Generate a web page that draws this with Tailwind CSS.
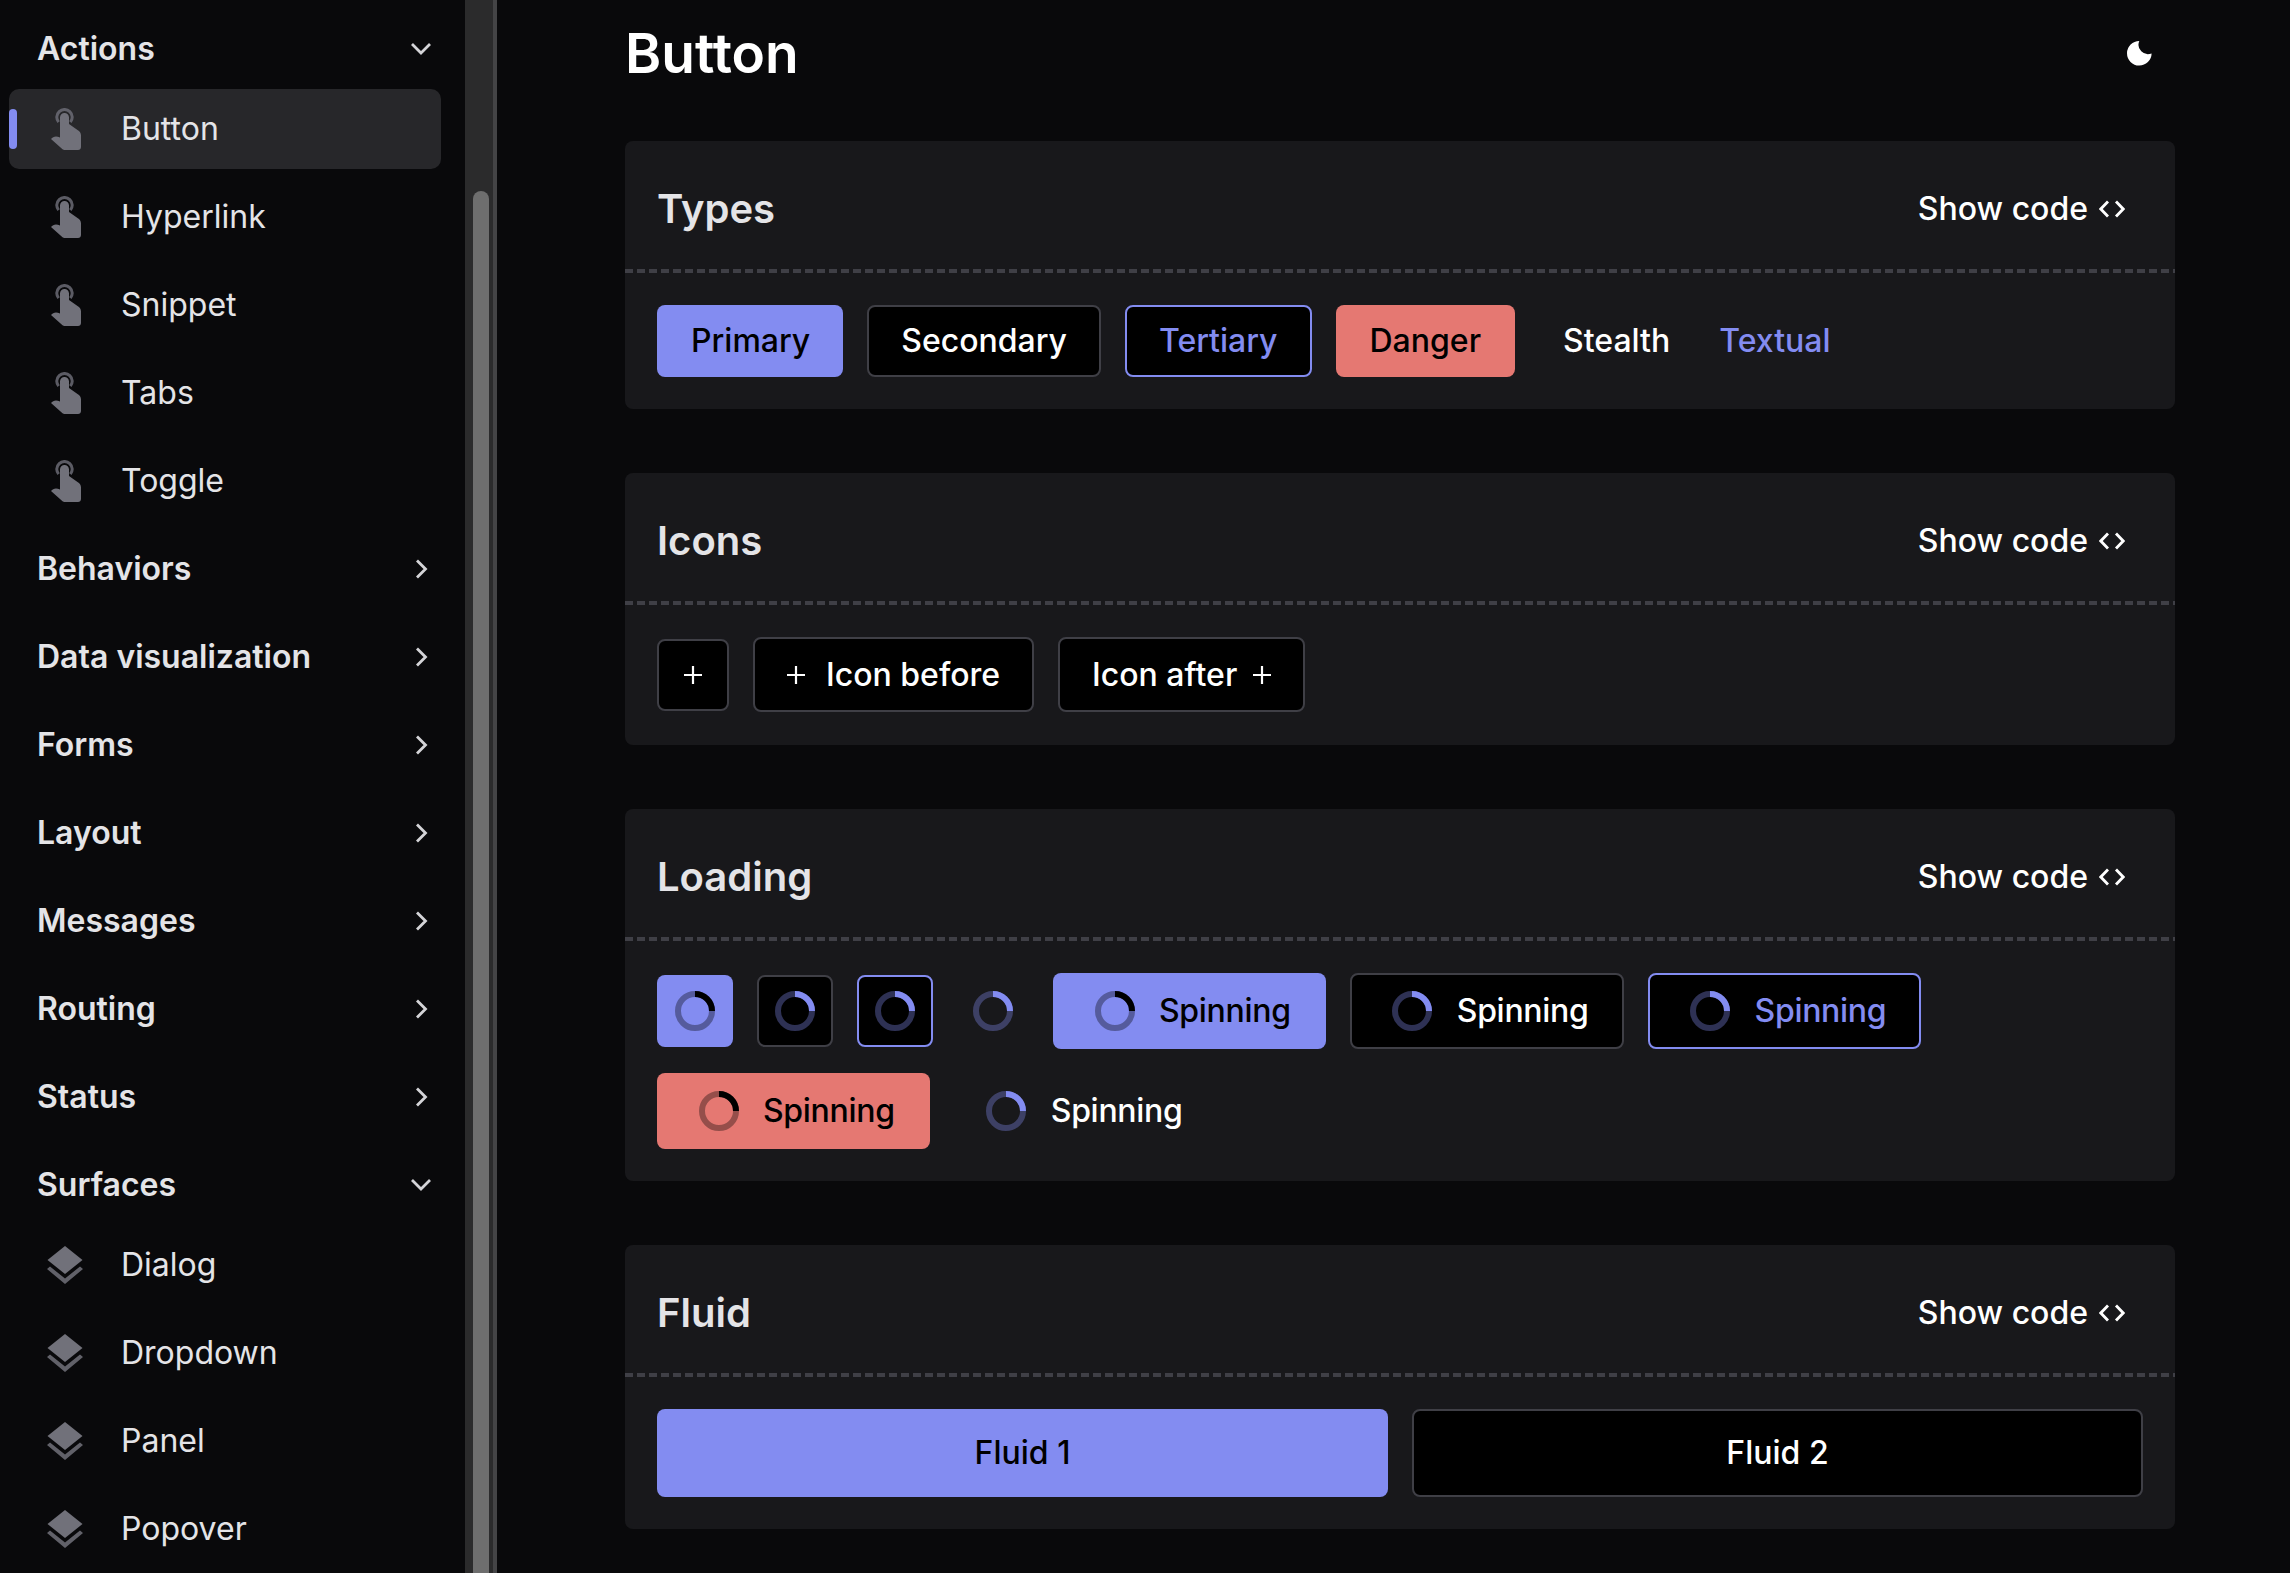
<!DOCTYPE html>
<html lang="en">

<head>
    <meta charset="UTF-8">
    <title>Button</title>
    <script src="https://cdn.jsdelivr.net/npm/@tailwindcss/browser@4"></script>
</head>

<body class="bg-[#09090b] h-screen overflow-hidden flex font-['Inter',sans-serif] text-[32px] leading-[48px]">
    <svg width="0" height="0" class="absolute">
        <defs>
            <symbol id="hand" viewBox="0 0 30 42">
                <path d="M6.450 15.100A9.200 9.200 0 1 1 20.550 15.100L18.250 13.200A6.200 6.200 0 1 0 8.750 13.200z" opacity="0.8" />
                <path d="M9 9.500a4.500 4.500 0 0 1 9 0V16L26.500 22c2.200 1.400 3.500 3 3.500 5.500V39c0 1.800-1.300 3-3 3H13.500c-.7 0-1.400-.3-2-.8L0 31c2.200-2.600 5-3.400 9-1.500z" />
            </symbol>
            <symbol id="layers" viewBox="0 0 36 38">
                <path d="M18 0l17.500 14L18 28 .5 14z" />
                <path d="M3 20.500L18 32.500l15-12 3 2.500L18 38 0 23z" opacity="0.85" />
            </symbol>
            <symbol id="right" viewBox="0 0 20 20">
                <path d="M6 1.500l8.500 8.500-8.500 8.500" fill="none" stroke="currentColor" stroke-width="2.800" />
            </symbol>
            <symbol id="down" viewBox="0 0 20 20">
                <path d="M1 5l9 9 9-9" fill="none" stroke="currentColor" stroke-width="2.800" />
            </symbol>
            <symbol id="plus" viewBox="0 0 20 20">
                <path d="M10 1v18M1 10h18" fill="none" stroke="currentColor" stroke-width="2.200" />
            </symbol>
            <symbol id="code" viewBox="0 0 26 18">
                <path d="M9 1.500L1.800 9 9 16.500M17 1.500L24.200 9 17 16.500" fill="none" stroke="currentColor" stroke-width="2.800" />
            </symbol>
            <symbol id="spin" viewBox="0 0 40 40">
                <circle cx="20" cy="20" r="17" fill="none" stroke="currentColor" stroke-width="6" opacity="0.35" />
                <path d="M20 3A17 17 0 0 1 37 20" fill="none" stroke="currentColor" stroke-width="6" />
            </symbol>
        </defs>
    </svg>

    <!-- Sidebar -->
    <aside class="w-[497px] shrink-0 flex border-r-4 border-[#444446] h-full">
        <nav class="w-[465px] shrink-0 flex flex-col gap-2 pt-[9px] pl-[9px] pr-6 text-[#e4e4e7]">
            <div>
                <div class="h-20 flex items-center justify-between pl-7 pr-[10px] font-semibold">Actions <svg class="w-5 h-5 text-[#d4d4d8]"><use href="#down" /></svg></div>
                <div class="flex flex-col gap-2">
                    <a class="relative h-20 flex items-center bg-[#27272a] rounded-[10px]">
                        <span class="absolute left-0 top-5 w-2 h-10 rounded bg-[#838cf1]"></span>
                        <svg class="w-[30px] h-[42px] ml-[42px] mr-10 fill-[#71717a]"><use href="#hand" /></svg>Button
                    </a>
                    <a class="h-20 flex items-center"><svg class="w-[30px] h-[42px] ml-[42px] mr-10 fill-[#71717a]"><use href="#hand" /></svg>Hyperlink</a>
                    <a class="h-20 flex items-center"><svg class="w-[30px] h-[42px] ml-[42px] mr-10 fill-[#71717a]"><use href="#hand" /></svg>Snippet</a>
                    <a class="h-20 flex items-center"><svg class="w-[30px] h-[42px] ml-[42px] mr-10 fill-[#71717a]"><use href="#hand" /></svg>Tabs</a>
                    <a class="h-20 flex items-center"><svg class="w-[30px] h-[42px] ml-[42px] mr-10 fill-[#71717a]"><use href="#hand" /></svg>Toggle</a>
                </div>
            </div>
            <div class="h-20 flex items-center justify-between pl-7 pr-[10px] font-semibold">Behaviors <svg class="w-5 h-5 text-[#d4d4d8]"><use href="#right" /></svg></div>
            <div class="h-20 flex items-center justify-between pl-7 pr-[10px] font-semibold">Data visualization <svg class="w-5 h-5 text-[#d4d4d8]"><use href="#right" /></svg></div>
            <div class="h-20 flex items-center justify-between pl-7 pr-[10px] font-semibold">Forms <svg class="w-5 h-5 text-[#d4d4d8]"><use href="#right" /></svg></div>
            <div class="h-20 flex items-center justify-between pl-7 pr-[10px] font-semibold">Layout <svg class="w-5 h-5 text-[#d4d4d8]"><use href="#right" /></svg></div>
            <div class="h-20 flex items-center justify-between pl-7 pr-[10px] font-semibold">Messages <svg class="w-5 h-5 text-[#d4d4d8]"><use href="#right" /></svg></div>
            <div class="h-20 flex items-center justify-between pl-7 pr-[10px] font-semibold">Routing <svg class="w-5 h-5 text-[#d4d4d8]"><use href="#right" /></svg></div>
            <div class="h-20 flex items-center justify-between pl-7 pr-[10px] font-semibold">Status <svg class="w-5 h-5 text-[#d4d4d8]"><use href="#right" /></svg></div>
            <div>
                <div class="h-20 flex items-center justify-between pl-7 pr-[10px] font-semibold">Surfaces <svg class="w-5 h-5 text-[#d4d4d8]"><use href="#down" /></svg></div>
                <div class="flex flex-col gap-2">
                    <a class="h-20 flex items-center"><svg class="w-9 h-[38px] ml-[38px] mr-[38px] fill-[#71717a]"><use href="#layers" /></svg>Dialog</a>
                    <a class="h-20 flex items-center"><svg class="w-9 h-[38px] ml-[38px] mr-[38px] fill-[#71717a]"><use href="#layers" /></svg>Dropdown</a>
                    <a class="h-20 flex items-center"><svg class="w-9 h-[38px] ml-[38px] mr-[38px] fill-[#71717a]"><use href="#layers" /></svg>Panel</a>
                    <a class="h-20 flex items-center"><svg class="w-9 h-[38px] ml-[38px] mr-[38px] fill-[#71717a]"><use href="#layers" /></svg>Popover</a>
                </div>
            </div>
        </nav>
        <!-- Scrollbar -->
        <div class="w-7 shrink-0 bg-[#2b2b2c] px-2 pt-[191px]">
            <div class="w-4 h-full rounded-t-lg bg-[#6e6e6e]"></div>
        </div>
    </aside>

    <!-- Main -->
    <main class="flex-1 pl-[128px] pr-[115px] text-white font-medium">
        <div class="h-[141px] pb-[35px] flex items-center justify-between">
            <h1 class="text-[55px] leading-[70px] font-semibold">Button</h1>
            <svg class="w-[25px] h-[25px] mr-[23px] fill-white" viewBox="0 0 25 25"><path d="M12.300 0A12.300 12.300 0 1 0 24.600 12.500A9.500 9.500 0 0 1 12.300 0z" /></svg>
        </div>

        <div class="flex flex-col gap-16">
            <!-- Types -->
            <section class="bg-[#18181b] rounded-lg">
                <header class="h-[128px] pt-[7px] flex items-center justify-between pl-8 pr-[50px]">
                    <h2 class="text-[40px] font-semibold text-[#e4e4e7]">Types</h2>
                    <span class="flex items-center gap-[11px]">Show code <svg class="w-[26px] h-[18px]"><use href="#code" /></svg></span>
                </header>
                <div class="h-1 bg-[repeating-linear-gradient(90deg,#3f3f46_0_8px,transparent_8px_12px)]"></div>
                <div class="pt-8 px-8 pb-8 flex items-center gap-6">
                    <button class="h-[72px] pl-[34px] pr-[33px] rounded-lg bg-[#838cf1] text-black">Primary</button>
                    <button class="h-[72px] px-[32px] rounded-lg bg-black border-2 border-[#3f3f46]">Secondary</button>
                    <button class="h-[72px] px-[32px] rounded-lg bg-black border-2 border-[#838cf1] text-[#838cf1]">Tertiary</button>
                    <button class="h-[72px] px-[34px] rounded-lg bg-[#e57872] text-black">Danger</button>
                    <button class="h-[72px] pl-6 pr-[25px]">Stealth</button>
                    <button class="h-[72px] text-[#838cf1]">Textual</button>
                </div>
            </section>

            <!-- Icons -->
            <section class="bg-[#18181b] rounded-lg">
                <header class="h-[128px] pt-[7px] flex items-center justify-between pl-8 pr-[50px]">
                    <h2 class="text-[40px] font-semibold text-[#e4e4e7]">Icons</h2>
                    <span class="flex items-center gap-[11px]">Show code <svg class="w-[26px] h-[18px]"><use href="#code" /></svg></span>
                </header>
                <div class="h-1 bg-[repeating-linear-gradient(90deg,#3f3f46_0_8px,transparent_8px_12px)]"></div>
                <div class="pt-8 px-8 pb-[33px] flex items-center gap-6">
                    <button class="w-[72px] h-[72px] flex items-center justify-center rounded-lg bg-black border-2 border-[#3f3f46]"><svg class="w-5 h-5"><use href="#plus" /></svg></button>
                    <button class="h-[75px] pl-[31px] pr-8 flex items-center gap-[20px] rounded-lg bg-black border-2 border-[#3f3f46]"><svg class="w-5 h-5"><use href="#plus" /></svg>Icon before</button>
                    <button class="h-[75px] pl-8 pr-[31px] flex items-center gap-[15px] rounded-lg bg-black border-2 border-[#3f3f46]">Icon after<svg class="w-5 h-5"><use href="#plus" /></svg></button>
                </div>
            </section>

            <!-- Loading -->
            <section class="bg-[#18181b] rounded-lg">
                <header class="h-[128px] pt-[7px] flex items-center justify-between pl-8 pr-[50px]">
                    <h2 class="text-[40px] font-semibold text-[#e4e4e7]">Loading</h2>
                    <span class="flex items-center gap-[11px]">Show code <svg class="w-[26px] h-[18px]"><use href="#code" /></svg></span>
                </header>
                <div class="h-1 bg-[repeating-linear-gradient(90deg,#3f3f46_0_8px,transparent_8px_12px)]"></div>
                <div class="pt-8 px-8 pb-8 flex flex-wrap items-center gap-6 tracking-[-0.3px]">
                    <button class="w-[76px] h-[72px] flex items-center justify-center rounded-lg bg-[#838cf1] text-black"><svg class="w-10 h-10"><use href="#spin" /></svg></button>
                    <button class="w-[76px] h-[72px] flex items-center justify-center rounded-lg bg-black border-2 border-[#3f3f46] text-[#838cf1]"><svg class="w-10 h-10"><use href="#spin" /></svg></button>
                    <button class="w-[76px] h-[72px] flex items-center justify-center rounded-lg bg-black border-2 border-[#838cf1] text-[#838cf1]"><svg class="w-10 h-10"><use href="#spin" /></svg></button>
                    <button class="w-[72px] h-[72px] flex items-center justify-center text-[#838cf1]"><svg class="w-10 h-10"><use href="#spin" /></svg></button>
                    <button class="h-[76px] pl-[42px] pr-[35px] flex items-center gap-6 rounded-lg bg-[#838cf1] text-black"><svg class="w-10 h-10"><use href="#spin" /></svg>Spinning</button>
                    <button class="h-[76px] pl-10 pr-[33px] flex items-center gap-[25px] rounded-lg bg-black border-2 border-[#3f3f46]"><svg class="w-10 h-10 text-[#838cf1]"><use href="#spin" /></svg>Spinning</button>
                    <button class="h-[76px] pl-10 pr-[33px] flex items-center gap-[25px] rounded-lg bg-black border-2 border-[#838cf1] text-[#838cf1]"><svg class="w-10 h-10"><use href="#spin" /></svg>Spinning</button>
                    <button class="h-[76px] pl-[42px] pr-[35px] flex items-center gap-6 rounded-lg bg-[#e57872] text-black"><svg class="w-10 h-10"><use href="#spin" /></svg>Spinning</button>
                    <button class="h-[76px] pl-[32px] flex items-center gap-[25px]"><svg class="w-10 h-10 text-[#838cf1]"><use href="#spin" /></svg>Spinning</button>
                </div>
            </section>

            <!-- Fluid -->
            <section class="bg-[#18181b] rounded-lg">
                <header class="h-[128px] pt-[7px] flex items-center justify-between pl-8 pr-[50px]">
                    <h2 class="text-[40px] font-semibold text-[#e4e4e7]">Fluid</h2>
                    <span class="flex items-center gap-[11px]">Show code <svg class="w-[26px] h-[18px]"><use href="#code" /></svg></span>
                </header>
                <div class="h-1 bg-[repeating-linear-gradient(90deg,#3f3f46_0_8px,transparent_8px_12px)]"></div>
                <div class="pt-8 px-8 pb-8 grid grid-cols-2 gap-6">
                    <button class="h-[88px] rounded-lg bg-[#838cf1] text-black">Fluid 1</button>
                    <button class="h-[88px] rounded-lg bg-black border-2 border-[#3f3f46]">Fluid 2</button>
                </div>
            </section>
        </div>
    </main>
</body>

</html>
